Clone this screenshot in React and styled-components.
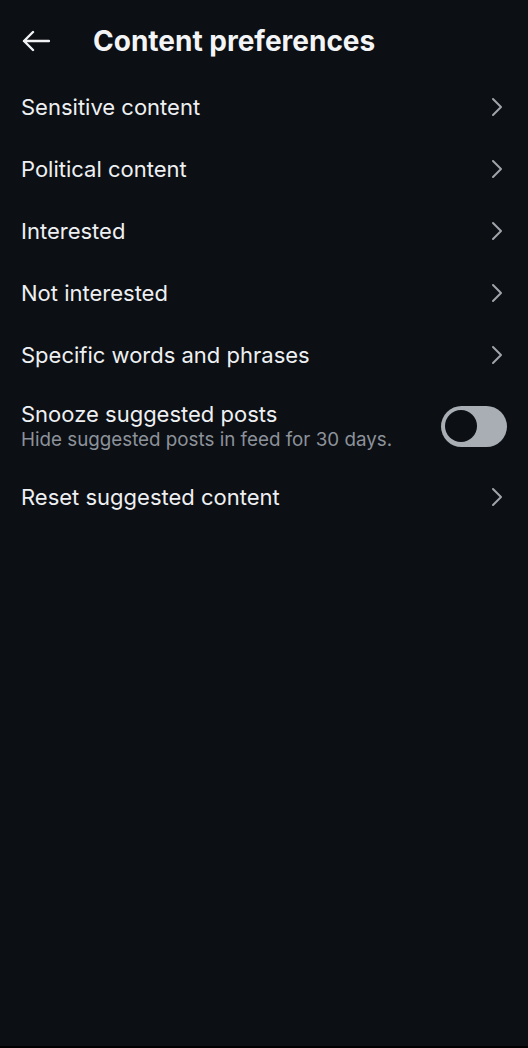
import React from "react";
import styled, { createGlobalStyle } from "styled-components";

const Global = createGlobalStyle`
  html, body { margin: 0; padding: 0; background: #000; }
  body { font-family: Inter, "Noto Sans", sans-serif; -webkit-font-smoothing: antialiased; }
`;

const Screen = styled.div`
  width: 528px;
  height: 1046px;
  background: #0c0f14;
  color: #f1f2f4;
  display: flex;
  flex-direction: column;
`;

const Header = styled.header`
  height: 70px;
  padding-top: 6px;
  display: flex;
  align-items: center;
  padding-left: 22px;
`;

const BackButton = styled.button`
  background: none;
  border: 0;
  padding: 0;
  width: 28px;
  height: 22px;
  display: flex;
  align-items: center;
  color: #f1f2f4;
  margin-right: 43px;
`;

const Title = styled.h1`
  margin: 0;
  font-size: 28px;
  line-height: 34px;
  font-weight: 700;
  color: #f3f4f6;
`;

const List = styled.div`
  display: flex;
  flex-direction: column;
`;

const Row = styled.div`
  height: ${(p) => p.$h || 62}px;
  display: flex;
  align-items: center;
  justify-content: space-between;
  padding: 0 21px;
`;

const Texts = styled.div`
  display: flex;
  flex-direction: column;
`;

const Label = styled.span`
  font-size: 22px;
  line-height: 27px;
  font-weight: 400;
  color: #eef0f2;
`;

const Sub = styled.span`
  font-size: 18.8px;
  line-height: 24px;
  color: #8d929a;
`;

const Chevron = styled.svg`
  width: 12px;
  height: 20px;
  margin-right: 4px;
`;

const Toggle = styled.div`
  width: 66px;
  height: 41px;
  border-radius: 21px;
  background: #a9aeb5;
  display: flex;
  align-items: center;
  padding-left: 4px;
  box-sizing: border-box;
`;

const Knob = styled.div`
  width: 32px;
  height: 32px;
  border-radius: 50%;
  background: #0c0f14;
`;

const ChevronIcon = () => (
  <Chevron viewBox="0 0 12 20" fill="none">
    <path d="M2 2 L10 10 L2 18" stroke="#a0a4ab" strokeWidth="2" strokeLinecap="round" strokeLinejoin="round" />
  </Chevron>
);

const items = [
  "Sensitive content",
  "Political content",
  "Interested",
  "Not interested",
  "Specific words and phrases",
];

export default function App() {
  return (
    <>
      <Global />
      <Screen>
        <Header>
          <BackButton aria-label="Back">
            <svg width="28" height="22" viewBox="0 0 28 22" fill="none">
              <path d="M27 11 H2 M11 2 L2 11 L11 20" stroke="#f1f2f4" strokeWidth="2.4" strokeLinecap="round" strokeLinejoin="round" />
            </svg>
          </BackButton>
          <Title>Content preferences</Title>
        </Header>
        <List>
          {items.map((t) => (
            <Row key={t}>
              <Label>{t}</Label>
              <ChevronIcon />
            </Row>
          ))}
          <Row $h={80}>
            <Texts>
              <Label>Snooze suggested posts</Label>
              <Sub>Hide suggested posts in feed for 30 days.</Sub>
            </Texts>
            <Toggle>
              <Knob />
            </Toggle>
          </Row>
          <Row>
            <Label>Reset suggested content</Label>
            <ChevronIcon />
          </Row>
        </List>
      </Screen>
    </>
  );
}
